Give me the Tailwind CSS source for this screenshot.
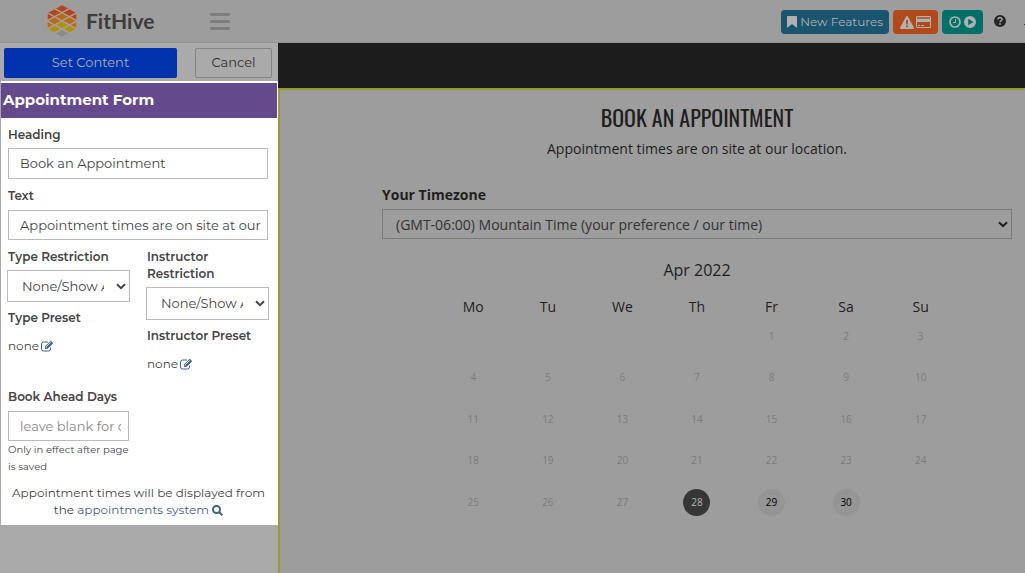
<!DOCTYPE html>
<html lang="en">
<head>
<meta charset="utf-8">
<meta name="viewport" content="width=device-width, initial-scale=1">
<title>FitHive</title>
<script src="https://cdn.jsdelivr.net/npm/@tailwindcss/browser@4"></script>
</head>
<body class="flex min-h-screen flex-col bg-[#9d9d9d] font-['Montserrat','Inter',sans-serif] text-[13px] text-[#444]">

<svg class="hidden" aria-hidden="true">
  <symbol id="edit" viewBox="0 0 13 12"><path d="M9.500 7.500v1.500a2 2 0 0 1-2 2h-5a2 2 0 0 1-2-2V4a2 2 0 0 1 2-2h4.500" fill="none" stroke="currentColor"/><path d="M4 9V6.600L9.800.8l2.400 2.400L6.400 9z" fill="currentColor"/><path d="M5.200 6.800 9.700 2.300M4.800 7.300l1 1" stroke="#fff" stroke-width=".8"/></symbol>
  <symbol id="chevron" viewBox="0 0 10 7"><path d="m1 1.200 4 4 4-4" fill="none" stroke="currentColor" stroke-width="2"/></symbol>
</svg>

<header class="flex h-[43px] shrink-0 items-center justify-between border-b border-[#929292]">
  <div class="flex items-center pl-[47px]">
    <a href="#" class="flex items-center gap-[9px]" aria-label="FitHive">
      <svg class="h-[34px] w-[30px]" viewBox="0 0 30 33">
        <clipPath id="hex"><path d="M15 0 30 8v17l-15 8-15-8V8z"/></clipPath>
        <g clip-path="url(#hex)" stroke="#a3a09c" stroke-width="1.300">
          <g fill="#b5441b"><path d="M15 0 22.500 4.100 15 8.200 7.500 4.100z"/><path d="M7.500 4.100 15 8.200 7.500 12.300 0 8.200z"/><path d="M22.500 4.100 30 8.200 22.500 12.300 15 8.200z"/><path d="M0 8.200 7.500 12.300 0 16.400z"/><path d="M30 8.200V16.400L22.500 12.300z"/></g>
          <g fill="#b86a18"><path d="M15 8.200 22.500 12.300 15 16.400 7.500 12.300z"/><path d="M7.500 12.300 15 16.400 7.500 20.500 0 16.400z"/><path d="M22.500 12.300 30 16.400 22.500 20.500 15 16.400z"/><path d="M0 16.400 7.500 20.500 0 24.600z"/><path d="M30 16.400V24.600L22.500 20.500z"/></g>
          <g fill="#ad9216"><path d="M15 16.400 22.500 20.500 15 24.600 7.500 20.500z"/><path d="M7.500 20.500 15 24.600 7.500 28.700 0 24.600z"/><path d="M22.500 20.500 30 24.600 22.500 28.700 15 24.600z"/></g>
          <path fill="#8a8a8a" d="M15 24.600 22.500 28.700 15 33 7.500 28.700z"/>
        </g>
      </svg>
      <span class="font-['Lato',sans-serif] text-[21px] font-bold text-[#3c3c3c]">FitHive</span>
    </a>
    <button type="button" class="ml-[56px] flex w-5 flex-col gap-[4px]" aria-label="Menu">
      <span class="h-[3px] w-full rounded-sm bg-[#7c7c7c]"></span>
      <span class="h-[3px] w-full rounded-sm bg-[#7c7c7c]"></span>
      <span class="h-[3px] w-full rounded-sm bg-[#7c7c7c]"></span>
    </button>
  </div>
  <div class="flex items-center gap-1 pt-[2px] text-[#b0b0b0]">
    <button type="button" class="flex h-6 items-center gap-[3px] rounded-sm bg-[#1a546e] px-[6px] text-[12px]">
      <svg class="h-[12px] w-[10px]" viewBox="0 0 10 12"><path d="M1 0h8a1 1 0 0 1 1 1v11L5 8l-5 4V1a1 1 0 0 1 1-1z" fill="currentColor"/></svg>
      New Features
    </button>
    <button type="button" class="flex h-6 items-center gap-[2px] rounded-sm bg-[#b04a1b] px-[7px]" aria-label="Billing alert">
      <svg class="h-[13px] w-[14px]" viewBox="0 0 14 13"><path fill="currentColor" fill-rule="evenodd" d="M7 0a1 1 0 0 1 .9.500l6 11a1 1 0 0 1-.9 1.500H1a1 1 0 0 1-.9-1.500l6-11A1 1 0 0 1 7 0zM6 4l.2 4.500h1.600L8 4zM6.100 9.400v1.800h1.800V9.400z"/></svg>
      <svg class="h-[12px] w-[15px]" viewBox="0 0 15 12"><path fill="currentColor" fill-rule="evenodd" d="M1.300 0h12.400A1.300 1.300 0 0 1 15 1.300v9.400a1.300 1.300 0 0 1-1.300 1.300H1.300A1.300 1.300 0 0 1 0 10.700V1.300A1.300 1.300 0 0 1 1.300 0zM1 1.200v1.600h13V1.200zM1 6v5h13V6zM2 9h2v1H2zm3 0h3v1H5z"/></svg>
    </button>
    <button type="button" class="flex h-6 items-center gap-[3px] rounded-sm bg-[#007069] px-[7px]" aria-label="Clock in">
      <svg class="h-[12px] w-[12px]" viewBox="0 0 12 12" fill="none" stroke="currentColor"><circle cx="6" cy="6" r="5" stroke-width="1.700"/><path d="M6.500 3v3.500H4"/></svg>
      <svg class="h-[12px] w-[12px]" viewBox="0 0 12 12"><path fill="currentColor" fill-rule="evenodd" d="M6 0a6 6 0 1 1 0 12A6 6 0 0 1 6 0zM4.200 2.700v6.600L9.500 6z"/></svg>
    </button>
    <button type="button" class="ml-[7px] flex pb-[2px] text-[#262626]" aria-label="Help">
      <svg class="h-[12px] w-[12px]" viewBox="0 0 12 12"><circle cx="6" cy="6" r="6" fill="currentColor"/><path d="M4 4.600C4 2 8 2.100 8 4.400 8 5.900 6 5.700 6 7.200" fill="none" stroke="#9d9d9d" stroke-width="1.600"/><path d="M5.100 8.200h1.800v1.600H5.100z" fill="#9d9d9d"/></svg>
    </button>
    <span class="mt-1 ml-[14px] h-px w-px bg-[#333]"></span>
  </div>
</header>

<div class="flex flex-1">
  <aside class="w-[278px] shrink-0 bg-[#aaa]">
    <div class="flex justify-between px-1 pt-[5px] pr-[6px] pb-[3px]">
      <button type="button" class="h-[30px] w-[173px] rounded-xs bg-[#0033ad] text-[#b0b0b0]">Set Content</button>
      <button type="button" class="h-[30px] w-[77px] rounded-xs border border-[#858585] text-[#2e2e2e]">Cancel</button>
    </div>
    <form class="ml-px w-[277px] border-t-2 border-white bg-white pb-[7px]">
      <h2 class="mr-px flex h-[35px] items-center bg-[#644a8c] px-[2px] text-[15px] font-bold text-white">Appointment Form</h2>
      <div class="px-[7px] pt-[8px] leading-[17px]">
        <label for="heading" class="block text-[12px] font-semibold">Heading</label>
        <input id="heading" type="text" value="Book an Appointment" class="mt-[5px] block h-[31px] w-[260px] border border-[#bbb] pr-[4px] pb-px pl-[11px] text-[13px]">
        <label for="text" class="mt-[8px] block text-[12px] font-semibold">Text</label>
        <input id="text" type="text" value="Appointment times are on site at our location." class="mt-[6px] block h-[30px] w-[260px] border border-[#bbb] pr-[4px] pb-px pl-[11px] text-[13px]">
        <div class="mt-[8px] flex gap-[16px]">
          <div class="w-[123px] text-[12px]">
            <label for="type" class="block font-semibold">Type Restriction</label>
            <div class="relative mt-[5px] mr-px -ml-px">
              <select id="type" class="block h-[32px] w-full appearance-none border border-[#bbb] bg-white pr-[25px] pl-[14px] text-[13px]"><option>None/Show All</option></select>
              <svg class="pointer-events-none absolute top-[13px] right-[4px] h-[7px] w-[10px]"><use href="#chevron"/></svg>
            </div>
            <p class="mt-[7px] font-semibold">Type Preset</p>
            <p class="mt-[11px] flex items-center gap-[2px] text-[12px]">none <a href="#" aria-label="Edit type preset" class="text-[#3f6386]"><svg class="h-[12px] w-[13px]"><use href="#edit"/></svg></a></p>
          </div>
          <div class="w-[123px] text-[12px]">
            <label for="instructor" class="block font-semibold">Instructor<br>Restriction</label>
            <div class="relative mt-[5px] mr-px -ml-px">
              <select id="instructor" class="block h-[33px] w-full appearance-none border border-[#bbb] bg-white pr-[25px] pl-[14px] text-[13px]"><option>None/Show All</option></select>
              <svg class="pointer-events-none absolute top-[13px] right-[4px] h-[7px] w-[10px]"><use href="#chevron"/></svg>
            </div>
            <p class="mt-[7px] font-semibold">Instructor Preset</p>
            <p class="mt-[11px] flex items-center gap-[2px] text-[12px]">none <a href="#" aria-label="Edit instructor preset" class="text-[#3f6386]"><svg class="h-[12px] w-[13px]"><use href="#edit"/></svg></a></p>
          </div>
        </div>
        <div class="mt-[16px] w-[123px]">
          <label for="days" class="block text-[12px] font-semibold">Book Ahead Days</label>
          <input id="days" type="text" placeholder="leave blank for default" class="mt-[6px] block h-[30px] w-[121px] border border-[#bbb] pr-[7px] pb-px pl-[11px] text-[13px] placeholder:text-[#888]">
          <p class="text-[10px]">Only in effect after page is saved</p>
        </div>
        <p class="mt-[9px] pr-[2px] text-center text-[12px]">Appointment times will be displayed from<br>the <a href="#" class="text-[#3f6386]">appointments system <svg class="inline h-[11px] w-[11px]" viewBox="0 0 11 11" fill="none" stroke="currentColor" stroke-width="2"><circle cx="4.500" cy="4.500" r="3.500"/><path d="m7 7 3.300 3.300"/></svg></a></p>
      </div>
    </form>
  </aside>

  <main class="flex flex-1 flex-col font-['Open_Sans',sans-serif] text-[#1f1f1f]">
    <div class="h-[45px] bg-[#1c1c1c]"></div>
    <div class="flex-1 border-t-2 border-l-2 border-[#999c2b] pt-[9px] pr-[13px] pl-[102px]">
      <h1 class="text-center font-['Oswald','Liberation_Sans_Narrow',sans-serif] text-[22px] leading-[36px]">BOOK AN APPOINTMENT</h1>
      <p class="mt-[4px] text-center text-[14px] leading-[20px]">Appointment times are on site at our location.</p>
      <label for="tz" class="mt-[26px] block text-[14px] leading-[20px] font-bold">Your Timezone</label>
      <div class="relative mt-[4px]">
        <select id="tz" class="block h-[30px] w-full appearance-none border border-[#7b7b7b] pr-6 pl-[13px] text-[14px] text-[#333]"><option>(GMT-06:00) Mountain Time (your preference / our time)</option></select>
        <svg class="pointer-events-none absolute top-[12px] right-[4px] h-[7px] w-[10px]"><use href="#chevron"/></svg>
      </div>
      <table class="mx-auto mt-[19px] w-[522px] table-fixed text-center">
        <caption class="text-[16px] leading-[24px]">Apr 2022</caption>
        <thead class="text-[14px] leading-[16px]">
          <tr class="h-[33px] align-bottom"><th class="font-normal">Mo</th><th class="font-normal">Tu</th><th class="font-normal">We</th><th class="font-normal">Th</th><th class="font-normal">Fr</th><th class="font-normal">Sa</th><th class="font-normal">Su</th></tr>
        </thead>
        <tbody class="text-[10px] text-[#7b7b7b]">
          <tr class="h-[42px]"><td></td><td></td><td></td><td></td><td>1</td><td>2</td><td>3</td></tr>
          <tr class="h-[41px]"><td>4</td><td>5</td><td>6</td><td>7</td><td>8</td><td>9</td><td>10</td></tr>
          <tr class="h-[42px]"><td>11</td><td>12</td><td>13</td><td>14</td><td>15</td><td>16</td><td>17</td></tr>
          <tr class="h-[41px]"><td>18</td><td>19</td><td>20</td><td>21</td><td>22</td><td>23</td><td>24</td></tr>
          <tr class="h-[42px]"><td>25</td><td>26</td><td>27</td>
            <td><button type="button" class="size-[27px] rounded-full bg-[#363636] align-middle text-[#b5b5b5]">28</button></td>
            <td><button type="button" class="size-[27px] rounded-full bg-[#959595] align-middle text-black">29</button></td>
            <td><button type="button" class="size-[27px] rounded-full bg-[#959595] align-middle text-black">30</button></td>
            <td></td></tr>
        </tbody>
      </table>
    </div>
  </main>
</div>
</body>
</html>
